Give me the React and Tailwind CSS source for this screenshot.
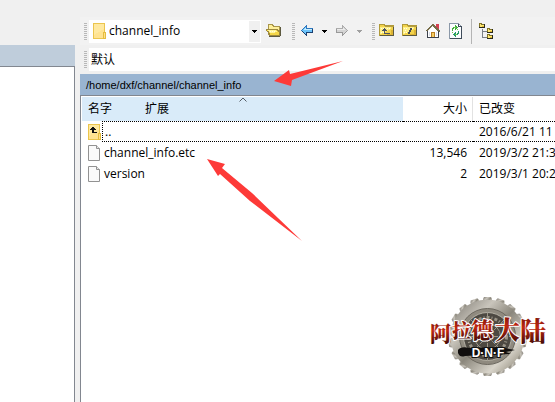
import { useState } from "react";

const FILES = [
  { name: "..", kind: "up", size: "", changed: "2016/6/21 11" },
  { name: "channel_info.etc", kind: "file", size: "13,546", changed: "2019/3/2 21:3" },
  { name: "version", kind: "file", size: "2", changed: "2019/3/1 20:2" },
];

// ─── Icons ───────────────────────────────────────────────────────────────────
function Icon({ children }) {
  return (
    <svg viewBox="0 0 16 16" className="h-4 w-4 shrink-0" shapeRendering="crispEdges" aria-hidden="true">
      {children}
    </svg>
  );
}

function FolderIcon({ up = false }) {
  return (
    <svg viewBox="0 0 13 16" className="h-4 w-[13px] shrink-0" shapeRendering="crispEdges" aria-hidden="true">
      <path d="M.5.5h11v15H.5z" fill="#ffe391" stroke="#ebc54d" />
      <path d="M1 1h10v5L1 12z" fill="#ffe9a0" />
      <path d="M10.5 9.5h2v6h-2z" fill="#ffe08a" stroke="#e6bd3f" />
      {up && <path d="M4 3h2v1h1v1h1v1H6v2h3v1H4V6H2V5h1V4h1z" fill="#111" />}
    </svg>
  );
}

function FileIcon() {
  return (
    <svg viewBox="0 0 13 16" className="h-4 w-[13px] shrink-0" aria-hidden="true">
      <path d="M.5.5h8l3 3v12H.5z" fill="#fafafa" stroke="#929292" />
      <path d="M8.5.5v3h3" fill="#e8e8e8" stroke="#929292" />
    </svg>
  );
}

function FolderBody({ children }) {
  return (
    <Icon>
      <path d="M0 1h6v1h9v11H0z" fill="#b09a3a" />
      <path d="M1 2h4v1h9v9H1z" fill="#f3d34a" />
      <path d="M1 4h11v2h-1v1H9v1H7v1H5v1H3v1H1z" fill="#ffef86" />
      <path d="M2 5h1v1H2zm2 0h1v1H4zm4 0h1v1H8zm2 0h1v1h-1zM3 7h1v1H3zm4 0h1v1H7zM2 9h1v1H2zm2 0h1v1H4z" fill="#fffde0" />
      <path d="M12 7h2v5H8v-1h4z" fill="#dcb335" />
      <path d="M6 3h8v1H6z" fill="#b49c42" />
      <path d="M1 13h14V4h-1v8H1z" fill="#5d5a40" />
      {children}
    </Icon>
  );
}

function OpenFolderIcon() {
  return (
    <Icon>
      <path d="M2 1h5v1h1v1h6v9H2z" fill="#a8954a" />
      <path d="M3 2h3v1h1v1h6v5H3z" fill="#fff09a" />
      <path d="M0 6h12v1h2v6H3v-2H2V9H1V8H0z" fill="#9c893f" />
      <path d="M1 7h10v1h1v1h1v3H4v-2H3V8H1z" fill="#f4d648" />
      <path d="M2 7h8v1h1v1H9v1H4V9H3V8H2z" fill="#fff49a" />
      <path d="M4 8h1v1H4zm2 0h1v1H6zm2 0h1v1H8z" fill="#fffde0" />
      <path d="M3 13h11V4h1v9h-1v1H3z" fill="#5d5a40" />
    </Icon>
  );
}

function ArrowIcon({ forward = false }) {
  return (
    <Icon>
      <g transform={forward ? "matrix(-1 0 0 1 16 0)" : undefined}>
        <path
          d="M2 7h1V6h1V5h1V4h1V3h1V2h1v3h6v5H8v3H7v-1H6v-1H5v-1H4V9H3V8H2z"
          fill={forward ? "#acacac" : "#2f77bd"}
        />
        <path
          d="M3 8h1v1h1v1h1v1h1V9h6V6h1v4H8v3H7v-1H6v-1H5v-1H4V9H3z"
          fill={forward ? "#999" : "#1b3f70"}
        />
        <path
          d="M3 7h1V6h1V5h1V4h1v2h6v3H7v2H6v-1H5V9H4V8H3z"
          fill={forward ? "#d4d4d4" : "#6cc4fb"}
        />
        <path d="M4 7h1V6h1V5h1v1h6v1z" fill={forward ? "#ececec" : "#c4edff"} />
      </g>
    </Icon>
  );
}

function HomeIcon() {
  return (
    <Icon>
      <path d="M11 1h3v6h-3z" fill="#d64052" />
      <path d="M3 8l5-5 5 5v6H3z" fill="#fff" />
      <path d="M7 1h2v1h1v1h1v1h1v1h1v1h1v1h1v2h-2V8h-1V7h-1V6h-1V5H9V4H8V3H7v1H6v1H5v1H4v1H3v1H1V7h1V6h1V5h1V4h1V3h1V2h1z" fill="#776d48" />
      <path d="M2 8h1v6h10V8h1v7H2z" fill="#3c424c" />
      <path d="M6 9h4v5H6z" fill="#b97e23" />
      <path d="M7 10h2v4H7z" fill="#f6ce62" />
      <path d="M4 9h1v4H4zm7 0h1v4h-1z" fill="#d9dfe9" />
    </Icon>
  );
}

function RefreshIcon() {
  return (
    <Icon>
      <path d="M1.5.5h9l3 3v12h-12z" fill="#fcfdff" stroke="#8b98a8" />
      <path d="M10.5.5v3h3M13.5 4v11.5H2" fill="none" stroke="#3f4c5a" />
      <path d="M5 4h2V2h1v1h1v1h1v1H9v1H8v1H7V5H6v1H5v2H4V5h1z" fill="#3fae3c" />
      <path d="M10 12H8v2H7v-1H6v-1H5v-1h1v-1h1V9h1v2h1v-1h1V8h1v3h-1z" fill="#239a6a" />
      <path d="M6 4h2v1H6zm1 7h2v1H7zM9 6h1v1H9zM4 9h1v1H4z" fill="#76c84d" />
    </Icon>
  );
}

function TreeIcon() {
  return (
    <svg viewBox="0 0 16 18" className="h-[18px] w-4 shrink-0" shapeRendering="crispEdges" aria-hidden="true">
      <path d="M3.5 7v8H8M4 9.5h4" fill="none" stroke="#7b8085" />
      {[[0, 1], [8, 6], [8, 12]].map(([x, y]) => (
        <g key={y} transform={`translate(${x} ${y})`}>
          <path d="M0 0h3v1h3v4H0z" fill="#817327" />
          <path d="M1 1h1v1h3v2H1z" fill="#ffe870" />
          <path d="M3 3h2v1H3z" fill="#ddb632" />
          <path d="M0 4h5V1h1v4H0z" fill="#29291c" />
        </g>
      ))}
    </svg>
  );
}

function Caret({ className = "text-black" }) {
  return (
    <svg viewBox="0 0 5 3" className={`h-[3px] w-[5px] shrink-0 ${className}`} shapeRendering="crispEdges" aria-hidden="true">
      <path d="M0 0h5v1H4v1H3v1H2V2H1V1H0z" fill="currentColor" />
    </svg>
  );
}

// ─── Toolbar pieces ──────────────────────────────────────────────────────────
function Grip() {
  return (
    <span className="h-[17px] w-[3px] shrink-0 bg-[repeating-linear-gradient(to_bottom,#b8b8b8_0px,#b8b8b8_1px,transparent_1px,transparent_2px)]" />
  );
}

function ToolButton({ label, children, disabled }) {
  return (
    <button type="button" aria-label={label} disabled={disabled} className="flex shrink-0 items-center">
      {children}
    </button>
  );
}

function Toolbar() {
  const [dir, setDir] = useState("channel_info");

  return (
    <div className="flex h-7 items-center gap-[10px] bg-[#f2f2f2] pl-1">
      <div className="flex items-center gap-[5px]">
        <div className="flex items-center gap-[2px]">
          <Grip />
          <div className="relative flex h-[23px] w-[172px] items-center bg-white">
            <select
              aria-label="目录"
              value={dir}
              onChange={(e) => setDir(e.target.value)}
              className="h-full w-full appearance-none pl-5 outline-none"
            >
              <option>channel_info</option>
            </select>
            <span className="pointer-events-none absolute left-1">
              <FolderIcon />
            </span>
            <span className="pointer-events-none absolute inset-y-px right-px flex w-[11px] items-center justify-center bg-[#f0f0f0]">
              <Caret />
            </span>
          </div>
        </div>
        <ToolButton label="打开目录"><OpenFolderIcon /></ToolButton>
      </div>

      <div className="flex items-center gap-[7px]">
        <div className="flex items-center gap-1">
          <Grip />
          <ToolButton label="后退"><ArrowIcon /></ToolButton>
        </div>
        <ToolButton label="后退历史"><Caret /></ToolButton>
        <ToolButton label="前进" disabled><ArrowIcon forward /></ToolButton>
        <ToolButton label="前进历史" disabled><Caret className="text-[#a0a0a0]" /></ToolButton>
      </div>

      <div className="flex items-center gap-[7px]">
        <div className="flex items-center gap-1">
          <Grip />
          <ToolButton label="上级目录">
            <FolderBody>
              <path d="M5 5h1v1h1v1h1v1H6v2h5v1H5V8H3V7h1V6h1z" fill="#4d5562" />
            </FolderBody>
          </ToolButton>
        </div>
        <ToolButton label="根目录">
          <FolderBody>
            <path d="M8 5h2v2H9v2H8v2H6V9h1V7h1z" fill="#464b52" />
          </FolderBody>
        </ToolButton>
        <ToolButton label="主目录"><HomeIcon /></ToolButton>
        <ToolButton label="刷新"><RefreshIcon /></ToolButton>
        <span className="h-[25px] w-px bg-[#b4b4b4]" />
        <ToolButton label="目录树"><TreeIcon /></ToolButton>
      </div>
    </div>
  );
}

// ─── File list ───────────────────────────────────────────────────────────────
function FileTable() {
  return (
    <table className="w-full table-fixed border-separate border-spacing-0 whitespace-nowrap">
      <colgroup>
        <col className="w-[321px]" />
        <col className="w-[70px]" />
        <col />
      </colgroup>
      <thead>
        <tr className="h-6 text-left">
          <th className="relative bg-[#d9ebf9] p-0 pl-[6px] font-normal">
            <svg viewBox="0 0 8 5" className="absolute top-0 left-1/2 h-[5px] w-2 -translate-x-1/2" aria-hidden="true">
              <path d="M.5 4.5L4 1l3.5 3.5" fill="none" stroke="#555d66" />
            </svg>
            <span className="flex">
              <span className="w-[57px]">名字</span>
              <span>扩展</span>
            </span>
          </th>
          <th className="border-r border-[#e2e2e2] p-0 pr-[5px] text-right font-normal">大小</th>
          <th className="p-0 pl-[6px] font-normal">已改变</th>
        </tr>
      </thead>
      <tbody>
        {FILES.map((f) => {
          const focused = f.kind === "up";
          const edge = focused ? "border-y border-dotted border-black" : "";
          return (
            <tr key={f.name} className="h-[21px]">
              <td className="p-0 pl-[6px]">
                <div className="flex h-[21px] items-center gap-px">
                  {focused ? <FolderIcon up /> : <FileIcon />}
                  <span
                    className={`flex h-full flex-1 items-center pl-[2px] ${focused ? "border-y border-l border-dotted border-black" : ""}`}
                  >
                    {f.name}
                  </span>
                </div>
              </td>
              <td className={`p-0 pr-[6px] text-right ${edge}`}>{f.size}</td>
              <td className={`p-0 pl-[6px] ${edge}`}>{f.changed}</td>
            </tr>
          );
        })}
      </tbody>
    </table>
  );
}

// ─── Drawn over the window ───────────────────────────────────────────────────
function RedArrows() {
  return (
    <svg viewBox="0 0 140 185" className="pointer-events-none absolute top-[58px] left-[205px] h-[185px] w-[140px]" aria-hidden="true">
      <path d="M138 3L87 22l-1 6-17-5 15-11 1 4z" fill="#fd3a38" />
      <path d="M2 101l18 5-3 4 30 25 50 48-52-40-30-27-2 2z" fill="#fd3a38" />
    </svg>
  );
}

const TEETH = Array.from({ length: 18 }, (_, i) => i * 20);

function Emblem() {
  return (
    <svg viewBox="0 0 130 100" className="pointer-events-none absolute top-[285px] left-[425px] h-[100px] w-[130px]" role="img" aria-label="阿拉德大陆 DNF">
      <defs>
        <linearGradient id="steel" x1="0" y1="0" x2="1" y2="1">
          <stop offset="0" stopColor="#78746c" />
          <stop offset=".3" stopColor="#c9c5bc" />
          <stop offset=".5" stopColor="#8b877c" />
          <stop offset=".75" stopColor="#d8d4ca" />
          <stop offset="1" stopColor="#77705f" />
        </linearGradient>
        <linearGradient id="blood" x1="0" y1="0" x2="0" y2="1">
          <stop offset="0" stopColor="#5a0904" />
          <stop offset=".45" stopColor="#c22812" />
          <stop offset="1" stopColor="#240302" />
        </linearGradient>
      </defs>
      <g fill="url(#steel)">
        {TEETH.map((a) => (
          <path key={a} d="M58 14l1-2h7l1 2v6h-9z" transform={`rotate(${a} 62.5 51.5)`} />
        ))}
        <circle cx="62.5" cy="51.5" r="37" />
      </g>
      <circle cx="62.5" cy="51.5" r="28" fill="#8f8a7f" stroke="#6c685f" />
      <circle cx="62.5" cy="51.5" r="24" fill="#4d4942" stroke="#b5b1a5" />
      <g fill="none" stroke="#9b9587">
        <circle cx="62.5" cy="51.5" r="19" strokeDasharray="3 2 1 2" strokeWidth="3" />
        <circle cx="62.5" cy="51.5" r="13" />
        <path d="M62.5 28v47M39 51.5h47M46 35l33 33M79 35L46 68" strokeDasharray="4 1" />
      </g>
      <g
        fill="url(#blood)"
        stroke="#fff"
        strokeWidth="2"
        strokeLinejoin="round"
        paintOrder="stroke"
        className="font-['Noto_Serif_CJK_SC','Noto_Sans_CJK_SC',sans-serif] font-black"
      >
        <text x="5" y="56" fontSize="21">阿</text>
        <text x="27" y="53" fontSize="19">拉</text>
        <text x="46" y="53" fontSize="22">德</text>
        <text x="70" y="54" fontSize="25">大</text>
        <text x="95" y="56" fontSize="26">陆</text>
      </g>
      <path d="M33 65q3-4 11-2l30-1 16 3-9 2 5 2-27 1-19 1q-5 2-7-3z" fill="#100e0d" />
      <text x="63" y="72" textAnchor="middle" fontSize="12" fill="#fff" stroke="#111" strokeWidth="2" paintOrder="stroke" className="font-['Liberation_Sans',sans-serif] font-bold">
        D·N·F
      </text>
    </svg>
  );
}

// ─── Main component ──────────────────────────────────────────────────────────
export default function App() {
  return (
    <div className="relative flex min-h-screen gap-[5px] overflow-hidden bg-[#f0f0f0] font-['Open_Sans','Noto_Sans_CJK_SC',sans-serif] text-[12px] leading-4 text-black">
      {/* Local panel, cut off on the left */}
      <aside className="flex w-[75px] shrink-0 flex-col pt-[45px]">
        <div className="h-[21px] bg-[#bfcddb]" />
        <div className="flex-1 border-t border-r border-[#828790] bg-white" />
      </aside>

      {/* Remote panel */}
      <main className="flex min-w-0 flex-1 flex-col pt-[17px]">
        <Toolbar />
        <div className="mt-[3px] flex h-[23px] items-center gap-[2px] pl-1">
          <Grip />
          <div className="flex h-full flex-1 items-center bg-white pl-[2px]">
            <button type="button">默认</button>
          </div>
        </div>

        <div className="mt-[3px] flex h-[21px] items-center bg-[#99b4d1] pl-[6px] font-['Liberation_Sans',sans-serif] text-[11px]">
          /home/dxf/channel/channel_info
        </div>
        <div className="flex-1 border-t border-l border-[#828790] bg-white pt-px pl-px">
          <FileTable />
        </div>
      </main>

      <RedArrows />
      <Emblem />
    </div>
  );
}
